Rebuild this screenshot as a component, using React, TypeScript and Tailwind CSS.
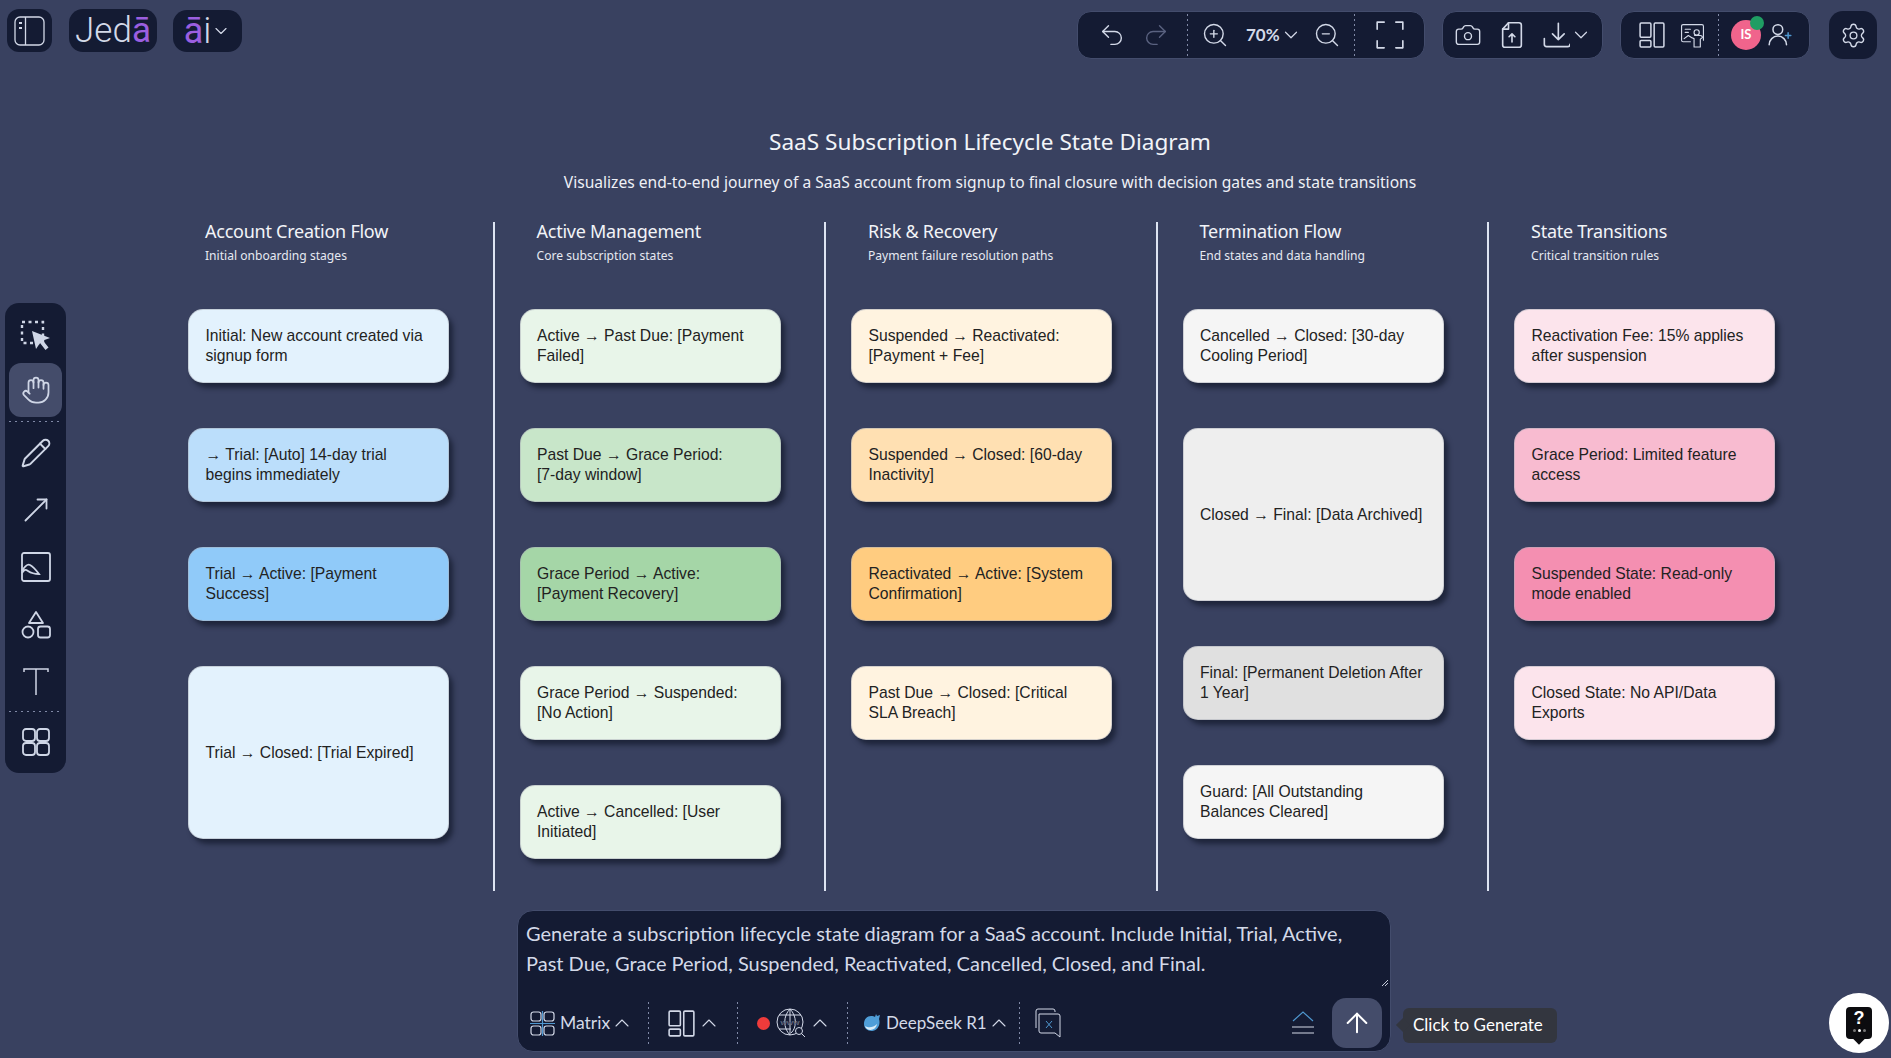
import React from 'react';
import { ChevronDown, ChevronUp, Undo2, Redo2, ZoomIn, ZoomOut, Camera, Settings, ArrowUp, Hand, Pencil, MoveUpRight } from 'lucide-react';

type Card = { text: string; color: string; tall?: boolean };
type Column = { title: string; sub: string; cards: Card[] };

const columns: Column[] = [
  {
    title: 'Account Creation Flow',
    sub: 'Initial onboarding stages',
    cards: [
      { text: 'Initial: New account created via\nsignup form', color: 'bg-[#e3f2fd]' },
      { text: '→ Trial: [Auto] 14-day trial\nbegins immediately', color: 'bg-[#bbdefb]' },
      { text: 'Trial → Active: [Payment\nSuccess]', color: 'bg-[#90caf9]' },
      { text: 'Trial → Closed: [Trial Expired]', color: 'bg-[#e3f2fd]', tall: true },
    ],
  },
  {
    title: 'Active Management',
    sub: 'Core subscription states',
    cards: [
      { text: 'Active → Past Due: [Payment\nFailed]', color: 'bg-[#e8f5e9]' },
      { text: 'Past Due → Grace Period:\n[7-day window]', color: 'bg-[#c8e6c9]' },
      { text: 'Grace Period → Active:\n[Payment Recovery]', color: 'bg-[#a5d6a7]' },
      { text: 'Grace Period → Suspended:\n[No Action]', color: 'bg-[#e8f5e9]' },
      { text: 'Active → Cancelled: [User\nInitiated]', color: 'bg-[#e8f5e9]' },
    ],
  },
  {
    title: 'Risk & Recovery',
    sub: 'Payment failure resolution paths',
    cards: [
      { text: 'Suspended → Reactivated:\n[Payment + Fee]', color: 'bg-[#fff3e0]' },
      { text: 'Suspended → Closed: [60-day\nInactivity]', color: 'bg-[#ffe0b2]' },
      { text: 'Reactivated → Active: [System\nConfirmation]', color: 'bg-[#ffcc80]' },
      { text: 'Past Due → Closed: [Critical\nSLA Breach]', color: 'bg-[#fff3e0]' },
    ],
  },
  {
    title: 'Termination Flow',
    sub: 'End states and data handling',
    cards: [
      { text: 'Cancelled → Closed: [30-day\nCooling Period]', color: 'bg-[#f5f5f5]' },
      { text: 'Closed → Final: [Data Archived]', color: 'bg-[#eeeeee]', tall: true },
      { text: 'Final: [Permanent Deletion After\n1 Year]', color: 'bg-[#e0e0e0]' },
      { text: 'Guard: [All Outstanding\nBalances Cleared]', color: 'bg-[#f5f5f5]' },
    ],
  },
  {
    title: 'State Transitions',
    sub: 'Critical transition rules',
    cards: [
      { text: 'Reactivation Fee: 15% applies\nafter suspension', color: 'bg-[#fce4ec]' },
      { text: 'Grace Period: Limited feature\naccess', color: 'bg-[#f8bbd0]' },
      { text: 'Suspended State: Read-only\nmode enabled', color: 'bg-[#f48fb1]' },
      { text: 'Closed State: No API/Data\nExports', color: 'bg-[#fce4ec]' },
    ],
  },
];

// dotted separators, the border-dotted version reads as a solid line at 1px
const Dots = ({ className = '' }: { className?: string }) => (
  <div className={`h-[42px] w-px shrink-0 bg-[linear-gradient(#8089a6_50%,transparent_50%)] bg-[length:1px_5px] ${className}`} />
);

const HDots = ({ className = '' }: { className?: string }) => (
  <div className={`w-[53px] h-px shrink-0 bg-[linear-gradient(90deg,#8089a6_40%,transparent_40%)] bg-[length:6px_1px] ${className}`} />
);

const Glyph = ({ size = 24, className = '', children }: { size?: number; className?: string; children: React.ReactNode }) => (
  <svg
    width={size}
    height={size}
    viewBox="0 0 24 24"
    fill="none"
    stroke="currentColor"
    strokeWidth={1.4}
    strokeLinecap="round"
    strokeLinejoin="round"
    className={`shrink-0 ${className}`}
  >
    {children}
  </svg>
);

const LayoutIcon = ({ size = 26, className = '' }: { size?: number; className?: string }) => (
  <Glyph size={size} className={className}>
    <rect x="1" y="1" width="10" height="13" rx="1" />
    <rect x="1" y="17" width="10" height="6" rx="1" />
    <rect x="14" y="1" width="9" height="22" rx="1" />
  </Glyph>
);

const FlowDiagram = () => (
  <div className="w-[1604px] ml-[122px]">
    <h1 className="text-center text-[22.6px] leading-[32px] text-[#f2f4f8] font-['Noto_Sans',sans-serif] mt-[67px]">
      SaaS Subscription Lifecycle State Diagram
    </h1>
    <p className="text-center text-[15.6px] leading-[24px] text-[#eef0f6] font-['Noto_Sans',sans-serif] mt-[12px]">
      Visualizes end-to-end journey of a SaaS account from signup to final closure with decision gates and state transitions
    </p>
    <div className="flex gap-[25px] mt-[28px] h-[669px]">
      {columns.map((col, i) => (
        <div key={col.title} className={i < 4 ? 'w-[306.5px] border-r-2 border-[#dde4f2]' : 'w-[261px]'}>
          <div className="h-[88px] pl-[17px]">
            <div className="-mt-[1px] text-[18px] leading-[20px] tracking-[-0.25px] text-[#f2f4f8] font-['Noto_Sans',sans-serif]">{col.title}</div>
            <div className="text-[12.1px] leading-[16px] mt-[7px] text-[#e6e9f2] font-['Noto_Sans',sans-serif]">{col.sub}</div>
          </div>
          <div className="flex flex-col gap-[45px] w-[261px]">
            {col.cards.map(card => (
              <div
                key={card.text}
                className={`${card.color} ${card.tall ? 'h-[173px]' : 'h-[74px]'} flex items-center pl-[16.5px] rounded-[15px] border border-[#a9aeb8]/50 shadow-[4px_5px_5px_rgba(10,14,30,0.55)] text-[15.7px] leading-[20px] text-[#222222] font-['Liberation_Sans',sans-serif]`}
              >
                <span className="whitespace-pre-line">{card.text}</span>
              </div>
            ))}
          </div>
        </div>
      ))}
    </div>
  </div>
);

const TopBar = () => (
  <header className="flex items-start h-[59px] pt-[9px] text-[#d3d9e8] font-['Lato',sans-serif]">
    <button className="flex items-center justify-center w-[45px] h-[43px] ml-[7px] rounded-[12px] bg-[#141b33]">
      <svg width="32" height="30" viewBox="0 0 32 30" fill="none" stroke="currentColor" strokeWidth="1.3">
        <rect x="1" y="1" width="29" height="28" rx="5" />
        <path d="M11.5 1v28" />
        <path d="M5 7h3M5 12h3" strokeWidth="2" />
      </svg>
    </button>
    <div className="flex items-center justify-center w-[88px] h-[43px] ml-[17px] rounded-[14px] bg-[#141b33] text-[35px] leading-none font-light font-['Roboto',sans-serif]">
      Jed<span className="text-[#9b5fe0] font-normal">ā</span>
    </div>
    <div className="flex items-center justify-center w-[69px] h-[42px] ml-[16px] mt-[1px] rounded-[14px] bg-[#141b33] text-[36px] leading-none font-light font-['Roboto',sans-serif]">
      <span className="text-[#9b5fe0] font-normal">ā</span>i
      <ChevronDown size={20} strokeWidth={1.4} />
    </div>

    {/* undo, zoom, fullscreen */}
    <div className="flex items-center h-[48px] w-[348px] ml-[835px] mt-[2px] pl-[20px] rounded-[14px] bg-[#141b33] border border-[#434c6c]">
      <Undo2 size={28} strokeWidth={1.2} className="shrink-0" />
      <Redo2 size={28} strokeWidth={1.2} className="ml-[16px] shrink-0 text-[#5a6280]" />
      <Dots className="ml-[17px]" />
      <ZoomIn size={28} strokeWidth={1.2} className="ml-[13px] shrink-0" />
      <span className="ml-[17px] w-[32px] text-[17px] font-bold">70%</span>
      <ChevronDown size={22} strokeWidth={1.3} className="ml-[2px] shrink-0" />
      <ZoomOut size={28} strokeWidth={1.2} className="ml-[11px] shrink-0" />
      <Dots className="ml-[13px]" />
      <Glyph size={28} className="ml-[21px]">
        <path d="M7 1H1v6M17 1h6v6M1 17v6h6M23 17v6h-6" />
      </Glyph>
    </div>

    {/* capture, export */}
    <div className="flex items-center h-[48px] w-[161px] ml-[17px] mt-[2px] pl-[11px] rounded-[14px] bg-[#141b33] border border-[#434c6c]">
      <Camera size={28} strokeWidth={1.2} className="shrink-0" />
      <Glyph size={28} className="ml-[16px]">
        <path d="M9 1.5h9a2 2 0 0 1 2 2v17a2 2 0 0 1-2 2H6a2 2 0 0 1-2-2V7z" />
        <path d="M9 1.5V7H4M12 18v-7M9.5 13.5 12 11l2.5 2.5" />
      </Glyph>
      <Glyph size={28} className="ml-[16px]">
        <path d="M14 2v14M9 11l5 5 5-5M2 15v5a2 2 0 0 0 2 2h18a2 2 0 0 0 2-2" />
      </Glyph>
      <ChevronDown size={22} strokeWidth={1.3} className="shrink-0" />
    </div>

    {/* layout, presenter, users */}
    <div className="flex items-center h-[48px] w-[190px] ml-[17px] mt-[2px] pl-[18px] rounded-[14px] bg-[#141b33] border border-[#434c6c]">
      <LayoutIcon />
      <Glyph size={25} className="ml-[15px]">
        <path d="M10 18H3a1.5 1.5 0 0 1-1.500-1.500V3A1.500 1.500 0 0 1 3 1.500h18A1.500 1.500 0 0 1 22.500 3v13.500" strokeWidth={1.1} />
        <path d="M5 6h5M5 9h3M4 15l4-3 3 2" strokeWidth={1.1} />
        <circle cx="16" cy="9" r="2.500" strokeWidth={1.1} />
        <path d="M11 14l2.500 1V23h6v-7.500l2-1.500a2 2 0 0 0-2-2h-5.500" strokeWidth={1.1} />
      </Glyph>
      <Dots className="ml-[13px]" />
      <div className="relative ml-[12px] flex items-center justify-center w-[30px] h-[30px] rounded-full bg-[#f0648c] text-white text-[13px] font-bold">
        IS
        <span className="absolute -top-[4px] -right-[3px] w-[14px] h-[14px] rounded-full bg-[#1f9d63]" />
      </div>
      <Glyph size={26} className="ml-[6px]">
        <circle cx="10" cy="7" r="4.500" />
        <path d="M2 21a8 8 0 0 1 16 0" />
        <path d="M19.500 10v5M17 12.500h5" stroke="#4f97cf" />
      </Glyph>
    </div>

    <div className="flex items-center justify-center w-[48px] h-[48px] ml-[19px] mt-[2px] rounded-[14px] bg-[#141b33]">
      <Settings size={27} strokeWidth={1.2} />
    </div>
  </header>
);

const ToolRail = () => (
  <aside className="flex flex-col items-center w-[61px] h-[470px] ml-[5px] mt-[244px] shrink-0 rounded-[14px] bg-[#141b33] text-[#cfd6e6]">
    <div className="flex items-center justify-center h-[60px] pt-[6px]">
      <svg width="32" height="32" viewBox="0 0 32 32" fill="none">
        <path d="M2 2h21v21H2z" stroke="currentColor" strokeWidth="2.400" strokeDasharray="3 3.500" />
        <path d="M12 11l18 7-7 2.500 5.500 7-3 2.500-5.500-7-4 6z" fill="currentColor" />
      </svg>
    </div>
    <div className="flex items-center justify-center w-[53px] h-[54px] rounded-[12px] bg-[#444c6a]">
      <Hand size={30} strokeWidth={1.4} />
    </div>
    <HDots className="mt-[4px]" />
    <div className="flex items-center justify-center h-[60px] mt-[1px]"><Pencil size={32} strokeWidth={1.5} /></div>
    <div className="flex items-center justify-center h-[54px]"><MoveUpRight size={36} strokeWidth={1.2} /></div>
    <div className="flex items-center justify-center h-[60px]">
      <svg width="30" height="30" viewBox="0 0 30 30" fill="none" stroke="currentColor" strokeWidth="1.800">
        <rect x="1" y="1" width="28" height="28" rx="2" />
        <path d="M1 19c3-5 6-7 8-6s6 5 9 9c-4 0-8-1-11-3s-4-1-6 2" />
      </svg>
    </div>
    <div className="flex items-center justify-center h-[56px]">
      <svg width="30" height="30" viewBox="0 0 30 30" fill="none" stroke="currentColor" strokeWidth="1.800" strokeLinejoin="round">
        <path d="M15 2l7 11H8z" />
        <circle cx="7" cy="22" r="5.500" />
        <rect x="17" y="16.500" width="12" height="11" rx="2.500" />
      </svg>
    </div>
    <div className="flex items-center justify-center h-[58px]">
      <svg width="26" height="30" viewBox="0 0 26 30" fill="none" stroke="currentColor" strokeWidth="1.500">
        <path d="M1 5V2h24v3M13 2v26" />
      </svg>
    </div>
    <HDots />
    <div className="flex items-center justify-center h-[60px]">
      <svg width="28" height="28" viewBox="0 0 28 28" fill="none" stroke="currentColor" strokeWidth="1.800">
        <rect x="1" y="1" width="12" height="12" rx="3" />
        <rect x="15" y="1" width="12" height="12" rx="3" />
        <rect x="1" y="15" width="12" height="12" rx="3" />
        <rect x="15" y="15" width="12" height="12" rx="3" />
      </svg>
    </div>
  </aside>
);

const PromptBar = () => (
  <div className="relative flex flex-col w-[874px] h-[142px] ml-[517px] mt-[14px] rounded-[16px] bg-[#141b33] border border-[#434c6c] text-[#d3d9e8] font-['Lato',sans-serif]">
    <div className="h-[87px] pl-[8px] pt-[7px] text-[20px] leading-[30px]">
      <p>Generate a subscription lifecycle state diagram for a SaaS account. Include Initial, Trial, Active,</p>
      <p>Past Due, Grace Period, Suspended, Reactivated, Cancelled, Closed, and Final.</p>
    </div>
    <svg width="8" height="8" viewBox="0 0 8 8" className="absolute right-[1px] top-[68px] text-[#c5cbda]" stroke="currentColor" fill="none">
      <path d="M7 1 1 7M7 4 4 7" />
    </svg>
    <div className="flex items-center h-[50px] pl-[12px]">
      <svg width="25" height="25" viewBox="0 0 25 25" fill="none" stroke="currentColor" strokeWidth="1.200" className="shrink-0">
        <rect x="1" y="1" width="10" height="9" rx="2.500" />
        <rect x="14" y="1" width="10" height="9" rx="2.500" />
        <rect x="1" y="15" width="10" height="9" rx="2.500" />
        <rect x="14" y="15" width="10" height="9" rx="2.500" />
        <path d="M0 12.500h25M12.500 0v25" stroke="#4f97cf" />
      </svg>
      <span className="ml-[5px] w-[52px] shrink-0 text-[17.5px]">Matrix</span>
      <ChevronUp size={24} strokeWidth={1.1} className="-ml-[2px] shrink-0" />
      <Dots className="ml-[14px]" />
      <LayoutIcon size={27} className="ml-[19px]" />
      <ChevronUp size={24} strokeWidth={1.1} className="ml-[2px] shrink-0" />
      <Dots className="ml-[16px]" />
      <span className="ml-[19px] w-[13px] h-[13px] shrink-0 rounded-full bg-[#ef3b3b]" />
      <svg width="30" height="30" viewBox="0 0 30 30" fill="none" stroke="currentColor" strokeWidth="1" className="ml-[6px] shrink-0">
        <circle cx="14" cy="14" r="13" />
        <path d="M14 1v26M3 7h22M3 21h12M14 1c-7 7-7 19 0 26M14 1c7 7 7 19 1 24" />
        <text x="14" y="17" fontSize="8" textAnchor="middle" fill="currentColor" stroke="#141b33" strokeWidth="0.300">www</text>
        <circle cx="23" cy="23" r="3.500" fill="#141b33" />
        <path d="M25.500 25.500 29 29" />
      </svg>
      <ChevronUp size={24} strokeWidth={1.1} className="ml-[2px] shrink-0" />
      <Dots className="ml-[15px]" />
      <svg width="18" height="20" viewBox="0 0 18 20" className="ml-[15px] shrink-0">
        <path d="M1 11c0-5 3-8 7-8 2 0 3 0 4 1l1-3 1 2 3-1-1 4c2 6-2 12-7 12S1 15 1 11z" fill="#4f9ed8" />
        <path d="M2 13c3 2 8 2 12-2-1 7-10 8-12 2z" fill="#d9ecf8" />
      </svg>
      <span className="ml-[5px] w-[100px] shrink-0 whitespace-nowrap text-[17px]">DeepSeek R1</span>
      <ChevronUp size={24} strokeWidth={1.1} className="ml-[1px] shrink-0" />
      <Dots className="ml-[8px]" />
      <svg width="28" height="30" viewBox="0 0 28 30" fill="none" stroke="currentColor" strokeWidth="1" className="ml-[13px] shrink-0">
        <path d="M3 20V3a2 2 0 0 1 2-2h15a2 2 0 0 1 2 2v1" />
        <path d="M6 6h19a2 2 0 0 1 2 2v21l-5-4H8a2 2 0 0 1-2-2z" />
        <path d="M13 13l6 7M19 13l-6 7" stroke="#4f97cf" />
      </svg>
      <svg width="24" height="26" viewBox="0 0 24 26" fill="none" strokeWidth="1.200" stroke="currentColor" className="ml-[230px] shrink-0">
        <path d="M2 11l10-9 10 9" stroke="#4f97cf" />
        <path d="M1 17h22M1 23h22" />
      </svg>
      <button className="flex items-center justify-center w-[50px] h-[50px] ml-[17px] -mt-[1px] shrink-0 rounded-[14px] bg-[#444c6a] text-white">
        <ArrowUp size={32} strokeWidth={1.5} />
      </button>
    </div>

    {/* tooltip beside the send button */}
    <div className="absolute left-[885px] top-[97px] flex items-center h-[35px] w-[154px] pl-[10px] pb-[2px] rounded-[6px] bg-[#33363f] text-[17px] text-white whitespace-nowrap">
      <span className="absolute -left-[5px] top-[12px] w-[10px] h-[10px] rotate-45 bg-[#33363f]" />
      <span className="relative">Click to Generate</span>
    </div>
  </div>
);

export default function App() {
  return (
    <div className="relative flex flex-col w-[1891px] h-[1058px] overflow-hidden bg-[#394160]">
      <TopBar />
      <div className="flex h-[837px]">
        <ToolRail />
        <FlowDiagram />
      </div>
      <PromptBar />
      <div className="absolute left-[1829px] top-[993px] flex items-center justify-center w-[60px] h-[60px] rounded-full bg-white">
        <div className="relative flex flex-col items-center w-[26px] h-[32px] rounded-[4px] bg-[#0c0c0f] text-white font-['Liberation_Sans',sans-serif] font-bold text-[18px] leading-[22px]">
          ?
          <div className="flex gap-[2px]">
            <span className="w-[3px] h-[3px] rounded-full bg-[#777]" />
            <span className="w-[3px] h-[3px] rounded-full bg-white" />
            <span className="w-[3px] h-[3px] rounded-full bg-[#777]" />
          </div>
          <span className="absolute -bottom-[4px] w-[8px] h-[8px] rotate-45 bg-[#0c0c0f]" />
        </div>
      </div>
    </div>
  );
}
